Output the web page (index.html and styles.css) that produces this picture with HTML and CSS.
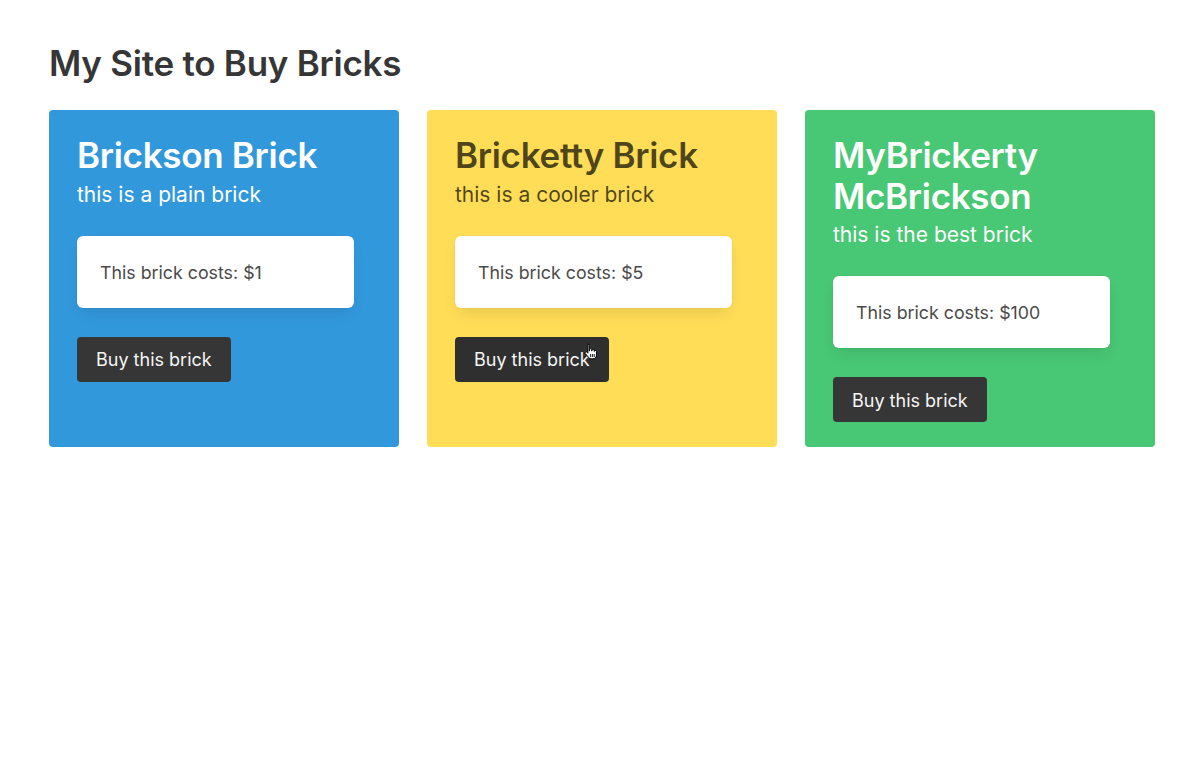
FILE: index.html
```html
<!DOCTYPE html>
<html lang="en">
<head>
<meta charset="utf-8">
<title>My Site to Buy Bricks</title>
<link rel="stylesheet" href="styles.css">
</head>
<body>
<main class="page">
  <h1 class="page-title">My Site to Buy Bricks</h1>
  <section class="cards">
    <article class="card card-blue">
      <h2 class="card-title">Brickson Brick</h2>
      <p class="card-sub">this is a plain brick</p>
      <div class="price">This brick costs: $1</div>
      <button class="buy">Buy this brick</button>
    </article>
    <article class="card card-yellow">
      <h2 class="card-title">Bricketty Brick</h2>
      <p class="card-sub">this is a cooler brick</p>
      <div class="price">This brick costs: $5</div>
      <button class="buy buy-hover">Buy this brick
        <svg class="cursor" width="14" height="17" viewBox="0 0 14 17" aria-hidden="true">
          <path d="M4 1.2c.7 0 1.2.5 1.2 1.2V8h.3V6.6c0-.6.5-1 1.1-1s1.1.4 1.1 1V8h.3V7.2c0-.6.5-1 1.1-1s1.1.4 1.1 1V8.4h.2c0-.6.5-1 1-1s1.1.4 1.1 1v3.4c0 2.3-1.5 4-3.7 4H7.3c-1.2 0-2-.5-2.7-1.4L1.3 10.6c-.4-.5-.3-1.2.2-1.6.5-.4 1.2-.3 1.6.2l.8 1V2.4c0-.7.4-1.2 1.1-1.2z" fill="#fff" stroke="#000" stroke-width="1"/>
          <path d="M6.6 11v3M8.4 11v3M10.2 11v3" stroke="#000" stroke-width=".9"/>
        </svg>
      </button>
    </article>
    <article class="card card-green">
      <h2 class="card-title">MyBrickerty McBrickson</h2>
      <p class="card-sub">this is the best brick</p>
      <div class="price">This brick costs: $100</div>
      <button class="buy">Buy this brick</button>
    </article>
  </section>
</main>
</body>
</html>
```
FILE: styles.css
```css
* { box-sizing: border-box; }
html, body { margin: 0; padding: 0; background: #fff; }
body {
  font-family: Inter, "Noto Sans", "Liberation Sans", sans-serif;
  color: #4a4a4a;
  width: 1200px;
  height: 777px;
  overflow: hidden;
}
.page {
  padding: 44px 0 0 49px;
}
.page-title {
  margin: 0 0 28px;
  font-size: 35px;
  line-height: 38px;
  font-weight: 600;
  color: #363636;
  letter-spacing: -0.25px;
}
.cards {
  display: flex;
  gap: 28px;
  align-items: stretch;
}
.card {
  width: 350px;
  border-radius: 4px;
  padding: 25px 28px 23px;
  min-height: 337px;
}
.card-blue { background: #3298dc; color: #fff; }
.card-yellow { background: #ffdd57; color: rgba(0,0,0,0.7); }
.card-green { background: #48c774; color: #fff; }
.card-title {
  margin: 0;
  font-size: 35px;
  line-height: 40.5px;
  font-weight: 600;
  letter-spacing: -0.3px;
}
.card-sub {
  margin: 6px 0 0;
  font-size: 21px;
  line-height: 25px;
  font-weight: 400;
}
.price {
  margin-top: 29px;
  width: 277px;
  height: 72px;
  background: #fff;
  border-radius: 6px;
  padding: 1px 23px 0;
  display: flex;
  align-items: center;
  font-size: 17.8px;
  color: #4a4a4a;
  box-shadow: 0 8px 16px -4px rgba(10,10,10,0.1), 0 0 0 1px rgba(10,10,10,0.02);
}
.buy {
  position: relative;
  margin-top: 29px;
  height: 45px;
  padding: 2px 18px 0;
  border: 1px solid transparent;
  border-radius: 4px;
  background: #363636;
  color: #f5f5f5;
  font-family: inherit;
  font-size: 18px;
  line-height: 1;
  display: inline-flex;
  align-items: center;
}
.buy-hover { background: #2f2f2f; }
.cursor {
  position: absolute;
  left: 128px;
  top: 5px;
}
```
